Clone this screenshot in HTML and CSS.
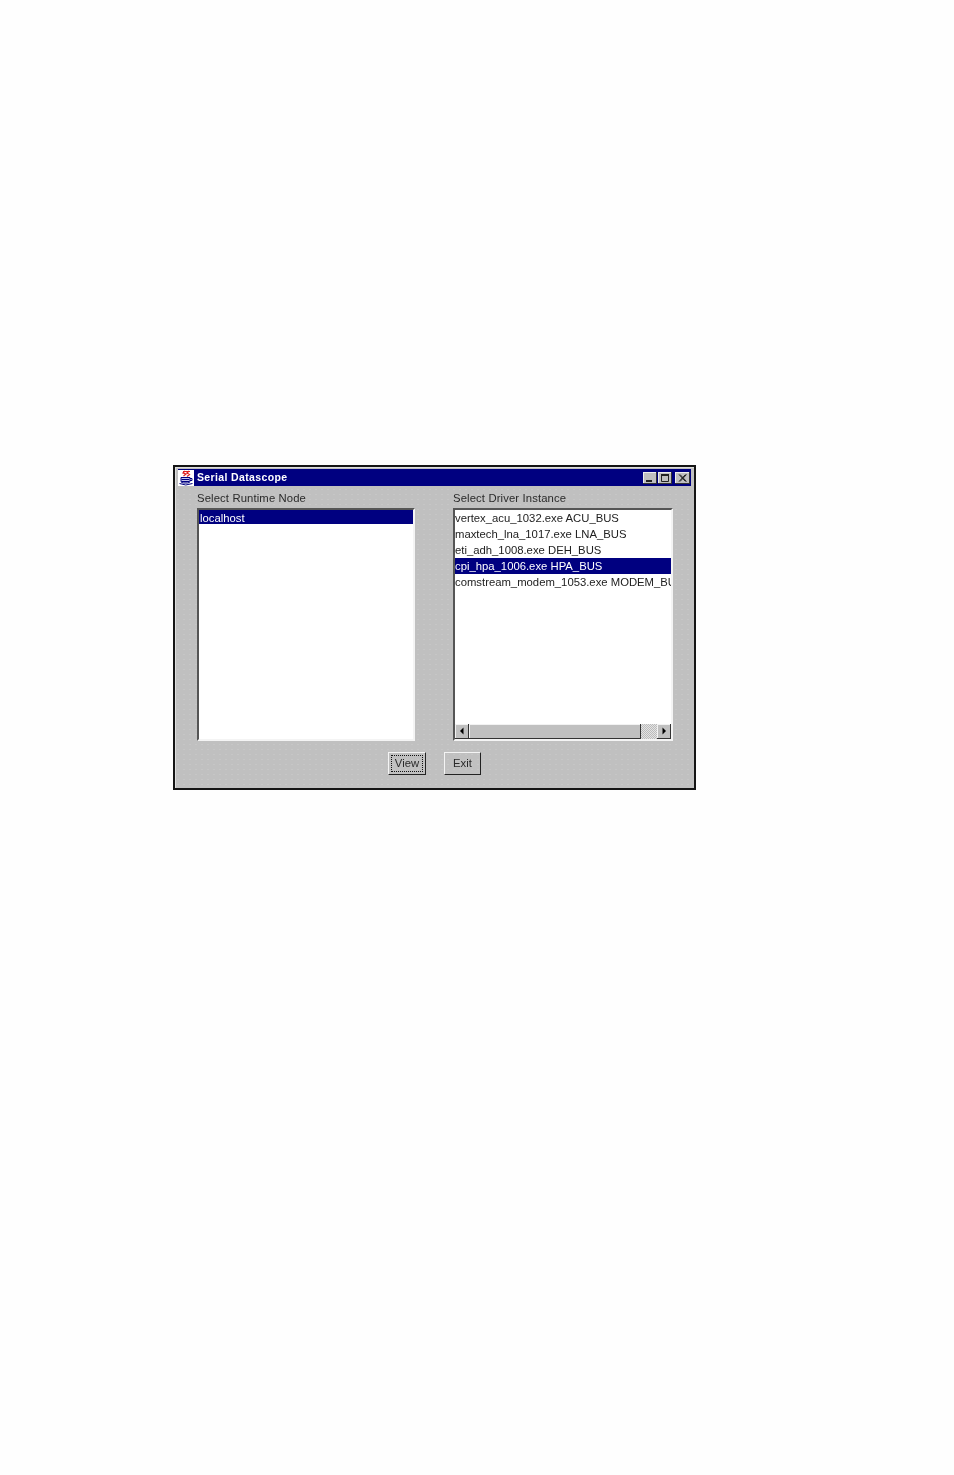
FILE: index.html
```html
<!DOCTYPE html>
<html lang="en">
<head>
<meta charset="utf-8">
<title>Serial Datascope</title>
<link rel="stylesheet" href="styles.css">
</head>
<body>
<div class="window">
  <div class="titlebar">
    <svg class="app-icon" viewBox="0 0 16 16" width="16" height="16">
      <rect width="16" height="16" fill="#fff"/>
      <path d="M7 1 L5 3 L8 4 L5.5 6 M11 1 L9 3 L11.5 4.5 L9 6.5 M5 1.5 H12" fill="none" stroke="#e02020" stroke-width="1.2"/>
      <path d="M3 7.5 H12 V11 Q12 13 9.5 13 H5.5 Q3 13 3 11 Z" fill="#c4c4e8" stroke="#000080" stroke-width="1"/>
      <path d="M12 8.5 H14 V10.5 H12 M1.5 13.5 Q7.5 16.5 14.5 13.5 M3.5 9.5 H11 M3.5 11.5 H11" fill="none" stroke="#000080" stroke-width="1"/>
    </svg>
    <span class="title">Serial Datascope</span>
    <div class="controls">
      <span class="ctl"><svg viewBox="0 0 14 12" width="14" height="12"><rect x="3" y="8" width="6" height="2" fill="#222"/></svg></span>
      <span class="ctl"><svg viewBox="0 0 14 12" width="14" height="12"><path d="M3.5 3.5 H10.5 V9.5 H3.5 Z" fill="none" stroke="#222" stroke-width="1"/><rect x="3" y="2" width="8" height="2" fill="#222"/></svg></span>
      <span class="ctl ctl-close"><svg viewBox="0 0 15 12" width="15" height="12"><path d="M4 2.5 L10.5 9.5 M5 2.5 L11.5 9.5 M10.5 2.5 L4 9.5 M11.5 2.5 L5 9.5" fill="none" stroke="#222" stroke-width="1"/></svg></span>
    </div>
  </div>
  <div class="content">
    <div class="columns">
      <section class="col col-left">
        <div class="label">Select Runtime Node</div>
        <div class="list list-left">
          <div class="row selected row-left">localhost</div>
        </div>
      </section>
      <section class="col col-right">
        <div class="label">Select Driver Instance</div>
        <div class="list list-right">
          <div class="rows">
            <div class="row">vertex_acu_1032.exe ACU_BUS</div>
            <div class="row">maxtech_lna_1017.exe LNA_BUS</div>
            <div class="row">eti_adh_1008.exe DEH_BUS</div>
            <div class="row selected">cpi_hpa_1006.exe HPA_BUS</div>
            <div class="row">comstream_modem_1053.exe MODEM_BUS</div>
          </div>
          <div class="scrollbar">
            <span class="arrow"><svg viewBox="0 0 14 14" width="14" height="14"><path d="M5 7 L8.5 3.5 V10.5 Z"/></svg></span>
            <span class="thumb"></span>
            <span class="track"></span>
            <span class="arrow"><svg viewBox="0 0 14 14" width="14" height="14"><path d="M9 7 L5.5 3.5 V10.5 Z"/></svg></span>
          </div>
        </div>
      </section>
    </div>
    <div class="buttons">
      <button class="btn btn-focus" type="button"><span class="btn-inner">View</span></button>
      <button class="btn btn-exit" type="button"><span class="btn-inner">Exit</span></button>
    </div>
  </div>
</div>
</body>
</html>
```
FILE: styles.css
```css
html, body { margin: 0; padding: 0; }
body {
  width: 954px;
  height: 1475px;
  background: #fefefe;
  padding: 465px 0 0 173px;
  box-sizing: border-box;
  overflow: hidden;
  font-family: "Liberation Sans", Arial, sans-serif;
}
.window {
  width: 523px;
  height: 325px;
  box-sizing: border-box;
  border: 2px solid #141414;
  padding: 2px 3px 0 3px;
  background-color: #c0c0c0;
  background-image: radial-gradient(circle, #c6c6c6 0.7px, transparent 0.9px);
  background-size: 6px 5px;
  box-shadow: inset 1px 1px 0 #dedede;
  filter: blur(0.3px);
}
.titlebar {
  height: 17px;
  background: #000080;
  display: flex;
  align-items: center;
  color: #fff;
}
.app-icon { flex: none; }
.title {
  margin: 0 0 2px 3px;
  font-size: 10.5px;
  font-weight: bold;
  letter-spacing: 0.36px;
}
.controls { margin-left: auto; margin-right: 1px; display: flex; }
.ctl {
  width: 14px;
  height: 12px;
  margin-right: 1px;
  background: #c0c0c0;
  display: block;
  box-shadow: inset -1px -1px 0 #333, inset 1px 1px 0 #eee;
}
.ctl svg { display: block; }
.ctl-close { width: 15px; margin: 0 0 0 2px; }
.columns { display: flex; }
.col-left { margin-left: 19px; width: 218px; }
.col-right { margin-left: 38px; width: 220px; }
.label {
  height: 22px;
  line-height: 25px;
  font-size: 11.3px;
  color: #2a2a2a;
  letter-spacing: 0.12px;
  white-space: nowrap;
}
.list {
  height: 233px;
  box-sizing: border-box;
  background: #fff;
  border: 2px solid;
  border-color: #555 #f4f4f4 #f4f4f4 #555;
  overflow: hidden;
  font-size: 11.3px;
}
.list-left { width: 218px; }
.list-right { width: 220px; display: flex; flex-direction: column; }
.rows { flex: 1; overflow: hidden; }
.row {
  height: 16px;
  line-height: 17px;
  color: #222;
  white-space: nowrap;
}
.row-left { height: 14px; line-height: 16px; padding-left: 1px; }
.selected { background: #000080; color: #fff; }
.scrollbar {
  height: 15px;
  display: flex;
  flex: none;
}
.arrow {
  width: 14px;
  height: 15px;
  background: #c0c0c0;
  box-shadow: inset -1px -1px 0 #333, inset 1px 1px 0 #f2f2f2;
  flex: none;
}
.arrow svg { display: block; }
.thumb {
  width: 172px;
  background: #c0c0c0;
  box-shadow: inset -1px -1px 0 #333, inset 1px 1px 0 #f2f2f2;
}
.track {
  flex: 1;
  background-color: #e4e4e4;
  background-image: linear-gradient(45deg, #bbb 25%, transparent 25%, transparent 75%, #bbb 75%), linear-gradient(45deg, #bbb 25%, transparent 25%, transparent 75%, #bbb 75%);
  background-size: 2px 2px;
  background-position: 0 0, 1px 1px;
}
.buttons {
  display: flex;
  gap: 18px;
  margin: 11px 0 0 210px;
}
.btn {
  width: 38px;
  height: 23px;
  padding: 2px;
  box-sizing: border-box;
  background: transparent;
  border: 1px solid;
  border-color: #f4f4f4 #222 #222 #f4f4f4;
  font: 11.3px "Liberation Sans", Arial, sans-serif;
  color: #2a2a2a;
}
.btn-exit { width: 37px; }
.btn-inner {
  display: block;
  height: 100%;
  line-height: 14px;
  box-sizing: border-box;
  border: 1px solid transparent;
}
.btn-focus .btn-inner { border: 1px dotted #111; }
```
